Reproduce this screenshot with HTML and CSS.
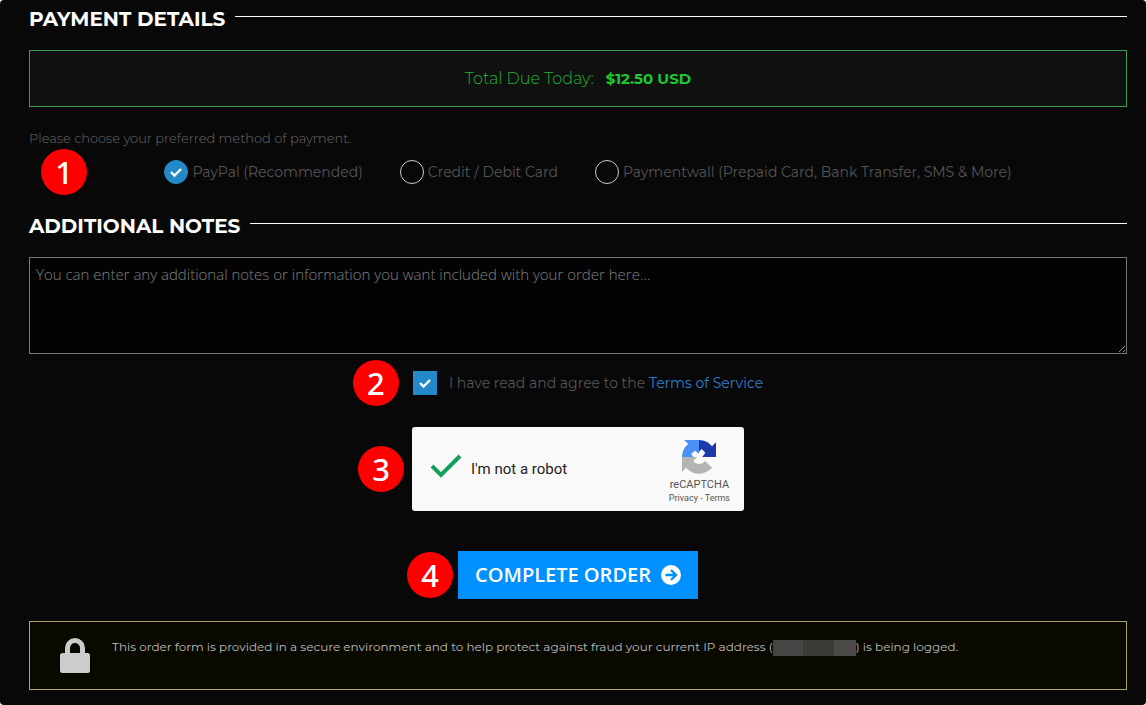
FILE: index.html
```html
<!DOCTYPE html>
<html lang="en">
<head>
  <meta charset="UTF-8">
  <meta name="viewport" content="width=device-width, initial-scale=1.0">
  <title>Checkout</title>
  <link rel="stylesheet" href="styles.css">
</head>
<body>

  <form class="checkout">
    <h2 class="section-title"><span>Payment Details</span></h2>

    <div class="total-due">
      <span>Total Due Today:</span>
      <strong>$12.50 USD</strong>
    </div>

    <p class="hint">Please choose your preferred method of payment.</p>

    <div class="methods">
      <span class="step">1</span>
      <label class="choice">
        <span class="tick round">
          <input type="radio" name="payment" checked>
          <svg viewBox="0 0 24 24"><path d="M7 12l3.500 3.500 6.500-6.500"/></svg>
        </span>
        PayPal (Recommended)
      </label>
      <label class="choice">
        <span class="tick round">
          <input type="radio" name="payment">
          <svg viewBox="0 0 24 24"><path d="M7 12l3.500 3.500 6.500-6.500"/></svg>
        </span>
        Credit / Debit Card
      </label>
      <label class="choice">
        <span class="tick round">
          <input type="radio" name="payment">
          <svg viewBox="0 0 24 24"><path d="M7 12l3.500 3.500 6.500-6.500"/></svg>
        </span>
        Paymentwall (Prepaid Card, Bank Transfer, SMS &amp; More)
      </label>
    </div>

    <h2 class="section-title"><label for="notes">Additional Notes</label></h2>
    <textarea id="notes" class="notes" placeholder="You can enter any additional notes or information you want included with your order here..."></textarea>

    <div class="terms">
      <span class="step">2</span>
      <span class="tick">
        <input type="checkbox" id="accept" checked>
        <svg viewBox="0 0 24 24"><path d="M7 12l3.500 3.500 6.500-6.500"/></svg>
      </span>
      <label for="accept">I have read and agree to the <a href="#">Terms of Service</a></label>
    </div>

    <div class="captcha">
      <span class="step">3</span>
      <label class="captcha-check">
        <span class="robot-tick">
          <input type="checkbox" checked>
          <svg viewBox="0 0 32 26"><path d="M2 13l9 9L30 3"/></svg>
        </span>
        I'm not a robot
      </label>
      <div class="captcha-brand">
        <svg class="captcha-logo" viewBox="0 0 64 64">
          <path fill="#1c3aa9" d="M64 32V4l-7.700 7.700A32 32 0 0 0 32 0v22l5-5 7 7-6 8z"/>
          <path fill="#4a90f5" d="M32 0H4l7.700 7.700A32 32 0 0 0 0 32h22l-5-5 7-7 8 6z"/>
          <path fill="#b4b4b4" d="M0 32v28l7.700-7.700A32 32 0 0 0 56.500 52L43.500 39.500A14 14 0 0 1 21 39.500L28.500 32z"/>
        </svg>
        <span class="captcha-name">reCAPTCHA</span>
        <span class="captcha-links"><a href="#">Privacy</a> - <a href="#">Terms</a></span>
      </div>
    </div>

    <div class="submit">
      <span class="step">4</span>
      <button type="submit" class="btn">
        Complete Order
        <svg viewBox="0 0 20 20">
          <circle cx="10" cy="10" r="10" fill="#fff"/>
          <path d="M4.500 10h10M10 5l5 5-5 5" fill="none" stroke="#0090ff" stroke-width="2.400"/>
        </svg>
      </button>
    </div>

    <div class="secure">
      <svg class="lock" viewBox="0 0 30 35">
        <path d="M7.500 17v-7a7.500 7.500 0 0 1 15 0v7" fill="none" stroke="#ccc" stroke-width="5"/>
        <rect y="15" width="30" height="20" rx="2.500" fill="#ccc"/>
      </svg>
      <p>This order form is provided in a secure environment and to help protect against fraud your current IP address (<span class="ip"></span>) is being logged.</p>
    </div>
  </form>

</body>
</html>
```
FILE: styles.css
```css
* {
  box-sizing: border-box;
}

body {
  margin: 0;
  background: #fff;
  font-family: Montserrat, Inter, sans-serif;
  font-weight: 400;
}

.checkout {
  min-height: 100vh;
  padding: 6px 19px 15px 29px;
  background: #080808;
  border-radius: 4px;
  color: #555;
}

/* Section headings with a rule running to the right edge */
.section-title {
  display: flex;
  gap: 10px;
  margin: 0;
  color: #fff;
  font-size: 20px;
  line-height: 26px;
  font-weight: 700;
  text-transform: uppercase;
}

.section-title::after {
  content: "";
  flex: 1;
  height: 1px;
  margin-top: 10px;
  background: #fff;
}

.total-due {
  display: flex;
  justify-content: center;
  align-items: center;
  gap: 12px;
  height: 57px;
  margin: 18px 0 22px;
  border: 1px solid #37a04a;
  background: #101010;
  color: #22b536;
  font-size: 16px;
  font-weight: 300;
}

.total-due strong {
  color: #1cc832;
  font-size: 15px;
  font-weight: 700;
}

.hint {
  margin: 0;
  color: #6a6a6a;
  font-size: 13px;
  line-height: 18px;
  font-weight: 300;
}

/* Red numbered step markers, laid over the form */
.step {
  position: absolute;
  top: 50%;
  right: 100%;
  width: 46px;
  height: 46px;
  margin-top: -23px;
  border-radius: 50%;
  background: #f00;
  color: #fff;
  font: 500 31px/46px "Noto Sans", sans-serif;
  text-align: center;
}

.methods {
  position: relative;
  display: flex;
  justify-content: center;
  gap: 37px;
  margin: 13px 0 29px;
  padding-left: 20px;
  font-size: 14px;
}

.methods .step {
  left: 12px;
}

.choice {
  display: flex;
  align-items: center;
  gap: 4px;
  line-height: 22px;
}

/* Styled radio / checkbox */
.tick {
  display: grid;
  width: 24px;
  height: 24px;
}

.tick input,
.tick svg {
  grid-area: 1 / 1;
  width: 24px;
  height: 24px;
  margin: 0;
}

.tick input {
  appearance: none;
  border: 1px solid #ccc;
}

.tick input:checked {
  border-color: #2489c9;
  background: #2489c9;
}

.tick svg {
  visibility: hidden;
  pointer-events: none;
  fill: none;
  stroke: #fff;
  stroke-width: 2.4;
}

.tick input:checked + svg {
  visibility: visible;
}

.round input {
  border-radius: 50%;
}

.notes {
  display: block;
  width: 100%;
  height: 97px;
  margin-top: 18px;
  padding: 5px 6px;
  border: 1px solid #777;
  background: #030303;
  color: #ccc;
  font: 300 15px/22px "Open Sans", sans-serif;
  resize: both;
}

.notes::placeholder {
  color: #808080;
}

.terms {
  position: relative;
  display: flex;
  align-items: center;
  gap: 12px;
  width: fit-content;
  margin: 17px auto 32px;
  padding-left: 20px;
  font-size: 14px;
  line-height: 22px;
}

.terms a {
  color: #2f7fd0;
  text-decoration: none;
}

.terms .step {
  margin-right: -6px;
}

.captcha {
  position: relative;
  display: flex;
  justify-content: space-between;
  width: 332px;
  height: 84px;
  margin: 0 auto 40px;
  padding: 0 14px 0 18px;
  border-radius: 3px;
  background: #f9f9f9;
  color: #222;
  font-family: Roboto, sans-serif;
}

.captcha .step {
  margin-right: 8px;
}

.captcha-check {
  display: flex;
  align-items: center;
  gap: 9px;
  font-size: 15px;
}

.robot-tick {
  display: grid;
  width: 32px;
  height: 32px;
}

.robot-tick input,
.robot-tick svg {
  grid-area: 1 / 1;
  width: 32px;
  height: 26px;
  margin: 0;
}

.robot-tick input {
  appearance: none;
}

.robot-tick svg {
  fill: none;
  stroke: #12a15c;
  stroke-width: 4;
  pointer-events: none;
}

.captcha-brand {
  display: flex;
  flex-direction: column;
  align-items: center;
  padding-top: 13px;
  color: #555;
}

.captcha-logo {
  width: 34px;
  height: 34px;
  margin-bottom: 4px;
}

.captcha-name {
  font-size: 11px;
  line-height: 14px;
}

.captcha-links {
  font-size: 9px;
  line-height: 12px;
}

.captcha-links a {
  color: inherit;
  text-decoration: none;
}

.submit {
  position: relative;
  width: fit-content;
  margin: 0 auto 22px;
}

.submit .step {
  margin-right: 5px;
}

.btn {
  display: flex;
  align-items: center;
  gap: 10px;
  height: 48px;
  padding: 0 17px;
  border: 0;
  background: #0090ff;
  color: #fff;
  font: 600 20px/26px "Open Sans", sans-serif;
  text-transform: uppercase;
  cursor: pointer;
}

.btn svg {
  width: 20px;
  height: 20px;
}

.secure {
  display: flex;
  gap: 22px;
  min-height: 69px;
  padding: 16px 30px;
  border: 1px solid #aea35a;
  background: #0a0900;
  color: #bbb;
  font-size: 12px;
  line-height: 18px;
}

.secure p {
  margin: 0;
}

.lock {
  flex: none;
  width: 30px;
  height: 35px;
}

/* Masked address */
.ip {
  display: inline-block;
  width: 83px;
  height: 16px;
  background: linear-gradient(90deg, #464544 36%, #3c3a37 36% 73%, #4a4948 73%);
  vertical-align: middle;
}
```
